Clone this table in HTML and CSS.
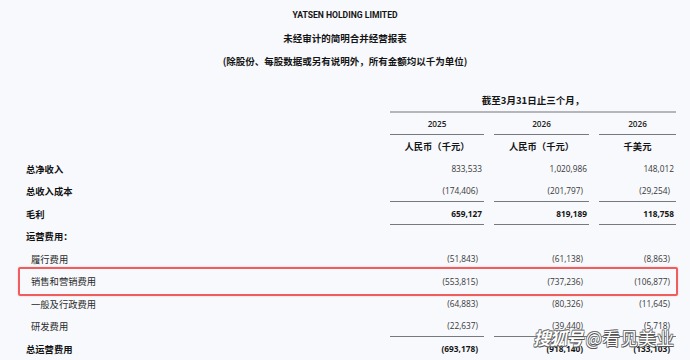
FILE: index.html
```html
<!DOCTYPE html>
<html lang="zh-CN">
<head>
<meta charset="utf-8">
<title>YATSEN HOLDING LIMITED</title>
<link rel="stylesheet" href="styles.css">
</head>
<body>
<div class="page">
  <header class="titles">
    <div class="t1">YATSEN HOLDING LIMITED</div>
    <div class="t2">未经审计的简明合并经营报表</div>
    <div class="t3">(除股份、每股数据或另有说明外，所有金额均以千为单位)</div>
  </header>

  <div class="table">
    <div class="row period">
      <div></div>
      <div class="span3">截至3月31日止三个月，</div>
    </div>
    <div class="row years">
      <div></div>
      <div class="hd line">2025</div>
      <div class="hd line">2026</div>
      <div class="hd line">2026</div>
    </div>
    <div class="row currency">
      <div></div>
      <div class="cur">人民币（千元）</div>
      <div class="cur">人民币（千元）</div>
      <div class="cur">千美元</div>
    </div>

    <div class="row data">
      <div class="label strong">总净收入</div>
      <div class="num">833,533</div>
      <div class="num">1,020,986</div>
      <div class="num">148,012</div>
    </div>
    <div class="row data">
      <div class="label strong">总收入成本</div>
      <div class="num neg line">(174,406)</div>
      <div class="num neg line">(201,797)</div>
      <div class="num neg line">(29,254)</div>
    </div>
    <div class="row data">
      <div class="label strong">毛利</div>
      <div class="num bold line">659,127</div>
      <div class="num bold line">819,189</div>
      <div class="num bold line">118,758</div>
    </div>
    <div class="row data">
      <div class="label strong">运营费用：</div>
      <div></div><div></div><div></div>
    </div>
    <div class="row data">
      <div class="label sub">履行费用</div>
      <div class="num neg">(51,843)</div>
      <div class="num neg">(61,138)</div>
      <div class="num neg">(8,863)</div>
    </div>
    <div class="row data highlight">
      <div class="label sub">销售和营销费用</div>
      <div class="num neg">(553,815)</div>
      <div class="num neg">(737,236)</div>
      <div class="num neg">(106,877)</div>
    </div>
    <div class="row data">
      <div class="label sub">一般及行政费用</div>
      <div class="num neg">(64,883)</div>
      <div class="num neg">(80,326)</div>
      <div class="num neg">(11,645)</div>
    </div>
    <div class="row data">
      <div class="label sub">研发费用</div>
      <div class="num neg line">(22,637)</div>
      <div class="num neg line">(39,440)</div>
      <div class="num neg line">(5,718)</div>
    </div>
    <div class="row data">
      <div class="label strong">总运营费用</div>
      <div class="num neg bold">(693,178)</div>
      <div class="num neg bold">(918,140)</div>
      <div class="num neg bold">(133,103)</div>
    </div>
  </div>

  <div class="watermark"><span class="wm-brand">搜狐号</span>@看见美业</div>
</div>
</body>
</html>
```

FILE: styles.css
```css
html, body {
  margin: 0;
  padding: 0;
  background: #f7f9fc;
}

.page {
  position: relative;
  width: 690px;
  height: 360px;
  overflow: hidden;
  color: #151515;
  font-family: "Noto Sans CJK SC", "Noto Sans", sans-serif;
}

.titles {
  padding-top: 4px;
  text-align: center;
}

.titles > div {
  height: 23px;
  line-height: 23px;
}

.t1 {
  font-family: Roboto, "Noto Sans", sans-serif;
  font-weight: 700;
  font-size: 8.6px;
}

.t2, .t3 {
  font-weight: 700;
  font-size: 9.5px;
}

.table {
  margin-top: 16px;
}

.row {
  display: grid;
  grid-template-columns: 1fr 94px 95px 77px;
  column-gap: 10px;
  padding: 0 14px 0 26px;
}

.row > div {
  box-sizing: border-box;
}

.period {
  height: 24px;
}

.span3 {
  grid-column: 2 / span 3;
  border-bottom: 2px solid #b4b6b9;
  text-align: center;
  font-weight: 700;
  font-size: 9.5px;
  line-height: 22px;
}

.years {
  height: 22px;
}

.hd {
  text-align: center;
  font-family: "Open Sans", sans-serif;
  font-weight: 600;
  font-size: 8.2px;
  line-height: 21px;
  color: #222;
}

.line {
  border-bottom: 1px solid #77797c;
}

.currency {
  height: 22.25px;
}

.cur {
  text-align: center;
  font-weight: 700;
  font-size: 9.3px;
  line-height: 22.25px;
}

.data {
  height: 22.5px;
}

.data > div {
  height: 22.5px;
  display: flex;
  align-items: center;
}

.label {
  font-size: 9.3px;
}

.label.strong {
  font-weight: 700;
  color: #111;
}

.label.sub {
  padding-left: 5px;
  font-weight: 400;
  color: #2a2a2a;
}

.num {
  justify-content: flex-end;
  font-family: "Open Sans", sans-serif;
  font-size: 8.3px;
  color: #383838;
  padding-right: 2px;
}

.num.neg {
  padding-right: 6px;
}

.num.bold {
  font-weight: 700;
  color: #151515;
}

.highlight {
  position: relative;
}

.highlight::after {
  content: "";
  position: absolute;
  left: 18px;
  right: 12px;
  top: -3px;
  bottom: -4px;
  border: 2px solid #f05d5e;
  border-radius: 2px;
  box-shadow: 0 0 2px rgba(240, 93, 94, 0.35);
}

.watermark {
  position: absolute;
  left: 533px;
  top: 327px;
  font-family: "Noto Sans CJK SC", sans-serif;
  font-size: 17.5px;
  line-height: 22px;
  color: #ffffff;
  letter-spacing: 0.5px;
  text-shadow:
    0 0 1px #444,
    0.6px 0.6px 0 #555,
    -0.6px -0.6px 0 #777,
    0.6px -0.6px 0 #777,
    -0.6px 0.6px 0 #777;
}

.wm-brand {
  font-style: italic;
  font-weight: 700;
  letter-spacing: -1px;
  margin-right: 3px;
}
```
